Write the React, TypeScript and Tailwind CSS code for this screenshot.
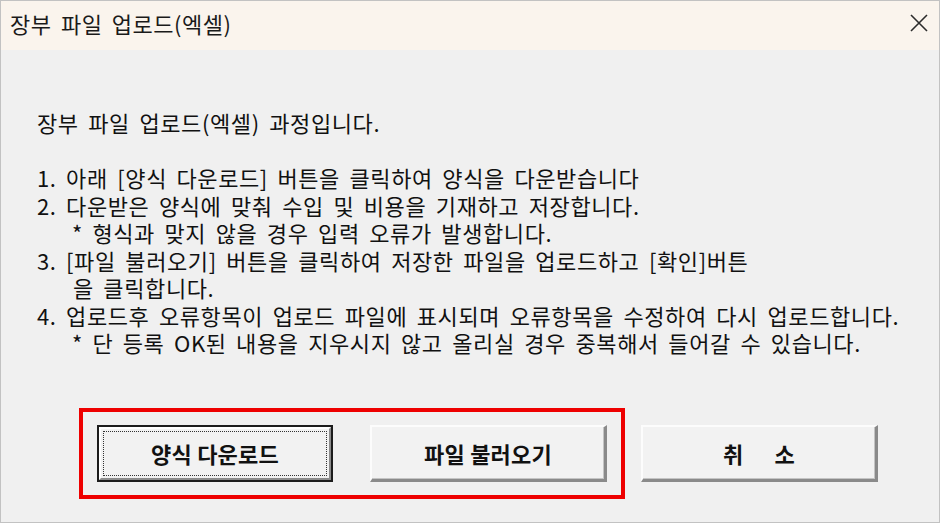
import type { ReactNode } from "react";

function ClassicButton({
  children,
  isDefault = false,
}: {
  children: ReactNode;
  isDefault?: boolean;
}) {
  if (isDefault) {
    return (
      <button className="w-[236px] h-[57px] border-2 border-[#1c1c1c] bg-[#f0f0f0] p-0">
        <div className="w-full h-full flex items-center justify-center border-t-2 border-l-2 border-t-white border-l-white border-r-2 border-b-2 border-r-[#8c8c8c] border-b-[#8c8c8c] outline-1 outline-dotted outline-[#333] outline-offset-[-5px] bg-[#f2f2f2]">
          <span className="text-[22px] font-bold tracking-[0.2px] text-[#111] leading-none">
            {children}
          </span>
        </div>
      </button>
    );
  }

  return (
    <button className="w-[237px] h-[57px] flex items-center justify-center bg-[#f2f2f2] border-t-2 border-l-2 border-t-[#fcfcfc] border-l-[#fcfcfc] border-r-[3px] border-b-[3px] border-r-[#8a8a8a] border-b-[#8a8a8a] shadow-[inset_-1px_-1px_0_#c4c4c4]">
      <span className="text-[22px] font-bold tracking-[0.2px] text-[#111] leading-none">
        {children}
      </span>
    </button>
  );
}

export default function App() {
  return (
    <div className="w-[940px] h-[523px] flex flex-col bg-[#f0f0f0] border border-[#c2c2c2] font-['Noto_Sans_CJK_KR',sans-serif] text-[#111] overflow-hidden">
      {/* title bar */}
      <div className="h-[49px] shrink-0 flex items-center justify-between bg-[#faf4ed] pl-[9px] pr-[11px] pb-[5px]">
        <span className="text-[22px] tracking-[0.5px] [word-spacing:4px] leading-none text-[#1a1a1a]">
          장부 파일 업로드(엑셀)
        </span>
        <svg width="18" height="18" viewBox="0 0 18 18" className="text-[#2b2b2b]">
          <path d="M1 1 L17 17 M17 1 L1 17" stroke="currentColor" strokeWidth="1.6" />
        </svg>
      </div>

      {/* body */}
      <div className="flex-1 flex flex-col">
        <div className="pl-[36px] pt-[59px] text-[22px] leading-[27.5px] tracking-[0.6px] [word-spacing:4px]">
          <p>장부 파일 업로드(엑셀) 과정입니다.</p>
          <div className="mt-[27.5px]">
            <p>1. 아래 [양식 다운로드] 버튼을 클릭하여 양식을 다운받습니다</p>
            <p>2. 다운받은 양식에 맞춰 수입 및 비용을 기재하고 저장합니다.</p>
            <p className="pl-[35px]">* 형식과 맞지 않을 경우 입력 오류가 발생합니다.</p>
            <p>3. [파일 불러오기] 버튼을 클릭하여 저장한 파일을 업로드하고 [확인]버튼</p>
            <p className="pl-[36px]">을 클릭합니다.</p>
            <p>4. 업로드후 오류항목이 업로드 파일에 표시되며 오류항목을 수정하여 다시 업로드합니다.</p>
            <p className="pl-[35px]">* 단 등록 OK된 내용을 지우시지 않고 올리실 경우 중복해서 들어갈 수 있습니다.</p>
          </div>
        </div>

        <div className="mt-[51px] ml-[78px] flex items-center gap-[16px]">
          <div className="flex gap-[37px] border-4 border-[#ee0000] px-[14px] py-[13px]">
            <ClassicButton isDefault>양식 다운로드</ClassicButton>
            <ClassicButton>파일 불러오기</ClassicButton>
          </div>
          <ClassicButton>
            <span className="flex gap-[31px]">
              <span>취</span>
              <span>소</span>
            </span>
          </ClassicButton>
        </div>
      </div>
    </div>
  );
}
